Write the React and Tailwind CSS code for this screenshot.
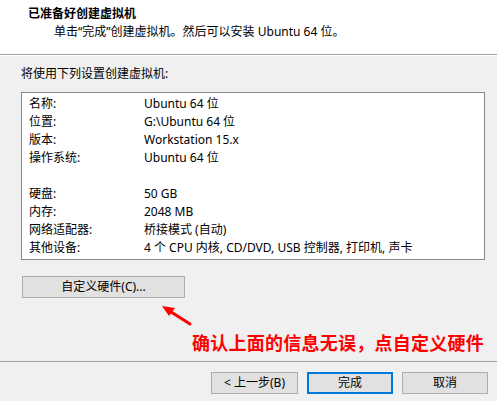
const rows = [
    ['名称:', 'Ubuntu 64 位'],
    ['位置:', 'G:\\Ubuntu 64 位'],
    ['版本:', 'Workstation 15.x'],
    ['操作系统:', 'Ubuntu 64 位'],
    null,
    ['硬盘:', '50 GB'],
    ['内存:', '2048 MB'],
    ['网络适配器:', '桥接模式 (自动)'],
    ['其他设备:', '4 个 CPU 内核, CD/DVD, USB 控制器, 打印机, 声卡'],
];

const font = { fontFamily: '"Noto Sans", "Noto Sans CJK SC", sans-serif' };

const App = () => {
    return (
        <div className="relative w-[497px] h-[401px] bg-[#f0f0f0] flex flex-col text-[12px] text-black overflow-hidden" style={font}>
            {/* Header */}
            <div className="h-[54px] bg-white pl-[28px] pt-[5px] shrink-0">
                <p className="font-bold leading-[18px]">已准备好创建虚拟机</p>
                <p className="pl-[26px] leading-[18px]">单击“完成”创建虚拟机。然后可以安装 Ubuntu 64 位。</p>
            </div>
            <div className="h-px bg-[#a0a0a0] shrink-0" />
            <div className="h-px bg-white shrink-0" />

            {/* Body */}
            <p className="pl-[21px] pt-[9px] leading-[18px]">将使用下列设置创建虚拟机:</p>
            <div className="ml-[21px] mt-[9px] w-[464px] h-[168px] bg-white border border-[#828790] pt-[2px] pl-[7px]">
                {rows.map((r, i) => r ? (
                    <div key={i} className="flex h-[18px] leading-[18px]">
                        <span className="w-[115px] shrink-0">{r[0]}</span>
                        <span className="whitespace-nowrap">{r[1]}</span>
                    </div>
                ) : (
                    <div key={i} className="h-[18px]" />
                ))}
            </div>

            <button className="ml-[22px] mt-[16px] w-[163px] h-[22px] bg-[#e1e1e1] border border-[#adadad] leading-[20px] text-center">
                自定义硬件(C)...
            </button>

            {/* annotation */}
            <p className="pl-[192px] mt-[33px] text-[18px] leading-[24px] font-bold text-[#ff0000] tracking-[0.25px] whitespace-nowrap">
                确认上面的信息无误，点自定义硬件
            </p>
            <svg className="absolute left-[158px] top-[300px]" width="40" height="30" viewBox="0 0 40 30">
                <line x1="32" y1="24" x2="10" y2="10" stroke="#ff0000" strokeWidth="3" strokeLinecap="round" />
                <polygon points="4,6 17,8 11,16" fill="#ff0000" />
            </svg>

            {/* Footer */}
            <div className="mt-auto">
                <div className="h-px bg-[#a0a0a0]" />
                <div className="flex justify-end gap-[9px] pr-[9px] pt-[10px] pb-[7px]">
                    <button className="w-[87px] h-[22px] bg-[#e1e1e1] border border-[#adadad] leading-[20px]">&lt; 上一步(B)</button>
                    <button className="w-[86px] h-[22px] bg-[#e1e1e1] border-2 border-[#0078d7] leading-[18px]">完成</button>
                    <button className="w-[86px] h-[22px] bg-[#e1e1e1] border border-[#adadad] leading-[20px]">取消</button>
                </div>
            </div>
        </div>
    );
};

export default App;
